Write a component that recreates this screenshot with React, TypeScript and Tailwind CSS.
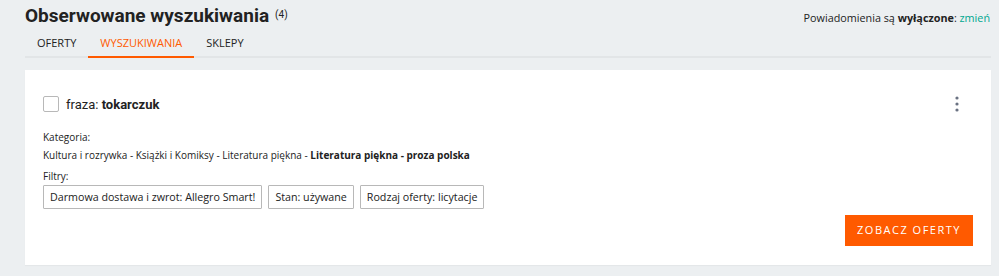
import { useState } from "react";

function Kebab() {
    return (
        <svg width="4" height="16" viewBox="0 0 4 16" className="text-gray-500">
            <circle cx="2" cy="2" r="1.6" fill="currentColor" />
            <circle cx="2" cy="8" r="1.6" fill="currentColor" />
            <circle cx="2" cy="14" r="1.6" fill="currentColor" />
        </svg>
    );
}

const filters = [
    "Darmowa dostawa i zwrot: Allegro Smart!",
    "Stan: używane",
    "Rodzaj oferty: licytacje",
];

export default function App() {
    const [checked, setChecked] = useState(false);

    return (
        <div className="w-[999px] h-[276px] bg-[#eceff1] pl-[25px] pr-[8px] font-['Open_Sans',sans-serif] text-[#222]">

            {/* Header */}
            <div className="flex items-start justify-between h-[33px]">
                <h1 className="font-['Roboto',sans-serif] font-bold text-[19px] leading-none pt-[6px] text-[#222]">
                    Obserwowane wyszukiwania
                    <span className="font-normal text-[10px] ml-[6px] align-[4px]">(4)</span>
                </h1>
                <p className="text-[10.8px] pt-[10px] pr-[1px]">
                    Powiadomienia są <b className="font-bold">wyłączone</b>: <a className="text-[#00a790] cursor-pointer">zmień</a>
                </p>
            </div>

            {/* Tabs */}
            <div className="flex h-[25px] border-b-2 border-[#e2e5e7] text-[11px] uppercase">
                <div className="px-[12px] pt-[2px] text-[#222]">Oferty</div>
                <div className="px-[12px] pt-[2px] text-[#ff5a00] border-b-2 border-[#ff5a00] -mb-[2px]">Wyszukiwania</div>
                <div className="px-[12px] pt-[2px] text-[#222]">Sklepy</div>
            </div>

            {/* Card */}
            <div className="mt-[12px] bg-white h-[195px] pl-[18px] pr-[18px] pt-[26px] shadow-[0_1px_1px_rgba(0,0,0,0.03)]">
                <div className="flex items-center justify-between h-[16px]">
                    <label className="flex items-center gap-[7px] cursor-pointer">
                        <span
                            onClick={() => setChecked(!checked)}
                            className="w-[16px] h-[16px] border border-[#b8b8b8] rounded-[2px] bg-white"
                        />
                        <span className="font-['Roboto',sans-serif] text-[13px] leading-none text-[#222]">
                            fraza: <b className="font-bold">tokarczuk</b>
                        </span>
                    </label>
                    <div className="mr-[14px]">
                        <Kebab />
                    </div>
                </div>

                <div className="mt-[16px] text-[10px] leading-[18px]">Kategoria:</div>
                <div className="text-[10px] leading-[18px]">
                    Kultura i rozrywka - Książki i Komiksy - Literatura piękna - <b className="font-bold">Literatura piękna - proza polska</b>
                </div>
                <div className="mt-[3px] text-[10px] leading-[18px]">Filtry:</div>

                <div className="flex gap-[6px] mt-[0px]">
                    {filters.map((f) => (
                        <span
                            key={f}
                            className="h-[24px] px-[6px] border border-[#b8b8b8] rounded-[1px] text-[10.7px] leading-[22px] text-[#222]"
                        >
                            {f}
                        </span>
                    ))}
                </div>

                <div className="flex justify-end mt-[6px]">
                    <button className="w-[128px] h-[31px] bg-[#ff5a00] text-white text-[11px] tracking-[1.5px] uppercase">
                        Zobacz oferty
                    </button>
                </div>
            </div>
        </div>
    );
}
